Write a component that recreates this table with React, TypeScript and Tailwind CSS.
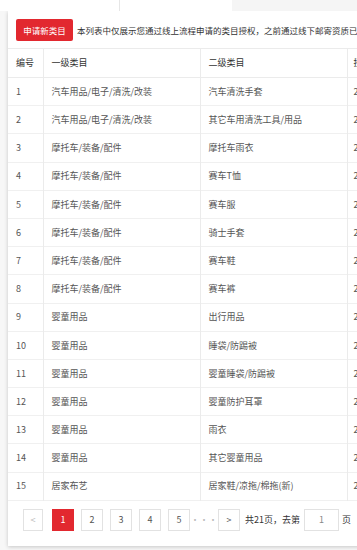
const rows: [string, string, string][] = [
  ["1", "汽车用品/电子/清洗/改装", "汽车清洗手套"],
  ["2", "汽车用品/电子/清洗/改装", "其它车用清洗工具/用品"],
  ["3", "摩托车/装备/配件", "摩托车雨衣"],
  ["4", "摩托车/装备/配件", "赛车T恤"],
  ["5", "摩托车/装备/配件", "赛车服"],
  ["6", "摩托车/装备/配件", "骑士手套"],
  ["7", "摩托车/装备/配件", "赛车鞋"],
  ["8", "摩托车/装备/配件", "赛车裤"],
  ["9", "婴童用品", "出行用品"],
  ["10", "婴童用品", "睡袋/防踢被"],
  ["11", "婴童用品", "婴童睡袋/防踢被"],
  ["12", "婴童用品", "婴童防护耳罩"],
  ["13", "婴童用品", "雨衣"],
  ["14", "婴童用品", "其它婴童用品"],
  ["15", "居家布艺", "居家鞋/凉拖/棉拖(新)"],
];

const font = { fontFamily: '"Noto Sans CJK SC", "Liberation Sans", sans-serif' };

function PageBtn({ children, active }: { children: React.ReactNode; active?: boolean }) {
  return (
    <div
      className={
        "flex h-[22px] w-[22px] shrink-0 items-center justify-center border text-[9px] " +
        (active ? "border-[#e2282f] bg-[#e2282f] text-white" : "border-[#e2e2e2] bg-white text-[#555]")
      }
    >
      {children}
    </div>
  );
}

export default function App() {
  return (
    <div className="h-[550px] w-[357px] overflow-hidden bg-[#f7f7f7]" style={font}>
      <div className="flex h-[11px]">
        <div className="w-[120px] border-r border-[#e6e6e6] bg-white" />
        <div className="w-[112px] bg-white" />
        <div className="flex-1 bg-[#f5f5f5]" />
      </div>
      <div className="ml-[8px] w-[420px] bg-white shadow-[0_1px_4px_rgba(0,0,0,0.2)]">
        <div className="flex items-center gap-[4px] px-[8px] pt-[8px]">
          <div className="flex h-[22px] w-[57px] shrink-0 items-center justify-center rounded-[2px] bg-[#e2282f] text-[8.5px] text-white">
            申请新类目
          </div>
          <div className="whitespace-nowrap text-[8.5px] text-[#333]">
            本列表中仅展示您通过线上流程申请的类目授权，之前通过线下邮寄资质已申请的类目不在此展示
          </div>
        </div>
        <table className="mt-[7px] table-fixed border-collapse text-left text-[9px] text-[#555]">
          <colgroup>
            <col className="w-[35px]" />
            <col className="w-[157px]" />
            <col className="w-[147px]" />
            <col className="w-[81px]" />
          </colgroup>
          <thead>
            <tr className="h-[29px] border-y border-[#ebebeb] text-[#333]">
              <th className="border-r border-[#ebebeb] px-[8px] font-normal">编号</th>
              <th className="border-r border-[#ebebeb] px-[8px] font-normal">一级类目</th>
              <th className="border-r border-[#ebebeb] px-[8px] font-normal">二级类目</th>
              <th className="px-[6px] font-normal whitespace-nowrap">授权时间</th>
            </tr>
          </thead>
          <tbody>
            {rows.map(([n, a, b]) => (
              <tr key={n} className="h-[28.2px] border-b border-[#f0f0f0]">
                <td className="border-r border-[#ebebeb] px-[8px]">{n}</td>
                <td className="border-r border-[#ebebeb] px-[8px] whitespace-nowrap">{a}</td>
                <td className="border-r border-[#ebebeb] px-[8px] whitespace-nowrap">{b}</td>
                <td className="px-[6px] whitespace-nowrap">2018-07-12</td>
              </tr>
            ))}
          </tbody>
        </table>
        <div className="flex h-[45px] items-start gap-[7px] pl-[15px] pt-[8px] text-[9px] text-[#333]">
          <div className="mr-[2px] flex h-[22px] w-[20px] shrink-0 items-center justify-center border border-[#e2e2e2] text-[#bbb]">
            &lt;
          </div>
          <PageBtn active>1</PageBtn>
          <PageBtn>2</PageBtn>
          <PageBtn>3</PageBtn>
          <PageBtn>4</PageBtn>
          <PageBtn>5</PageBtn>
          <span className="flex h-[22px] w-[14px] shrink-0 items-center justify-center text-[#bbb]">···</span>
          <PageBtn>&gt;</PageBtn>
          <span className="-ml-[2px] flex h-[22px] items-center whitespace-nowrap">共21页，去第</span>
          <div className="-ml-[3px] flex h-[22px] w-[35px] shrink-0 items-center justify-center border border-[#e2e2e2] text-[#888]">
            1
          </div>
          <span className="-ml-[4px] flex h-[22px] items-center">页</span>
          <div className="ml-[3px] h-[22px] w-[30px] shrink-0 border border-[#e2e2e2]" />
        </div>
      </div>
    </div>
  );
}
